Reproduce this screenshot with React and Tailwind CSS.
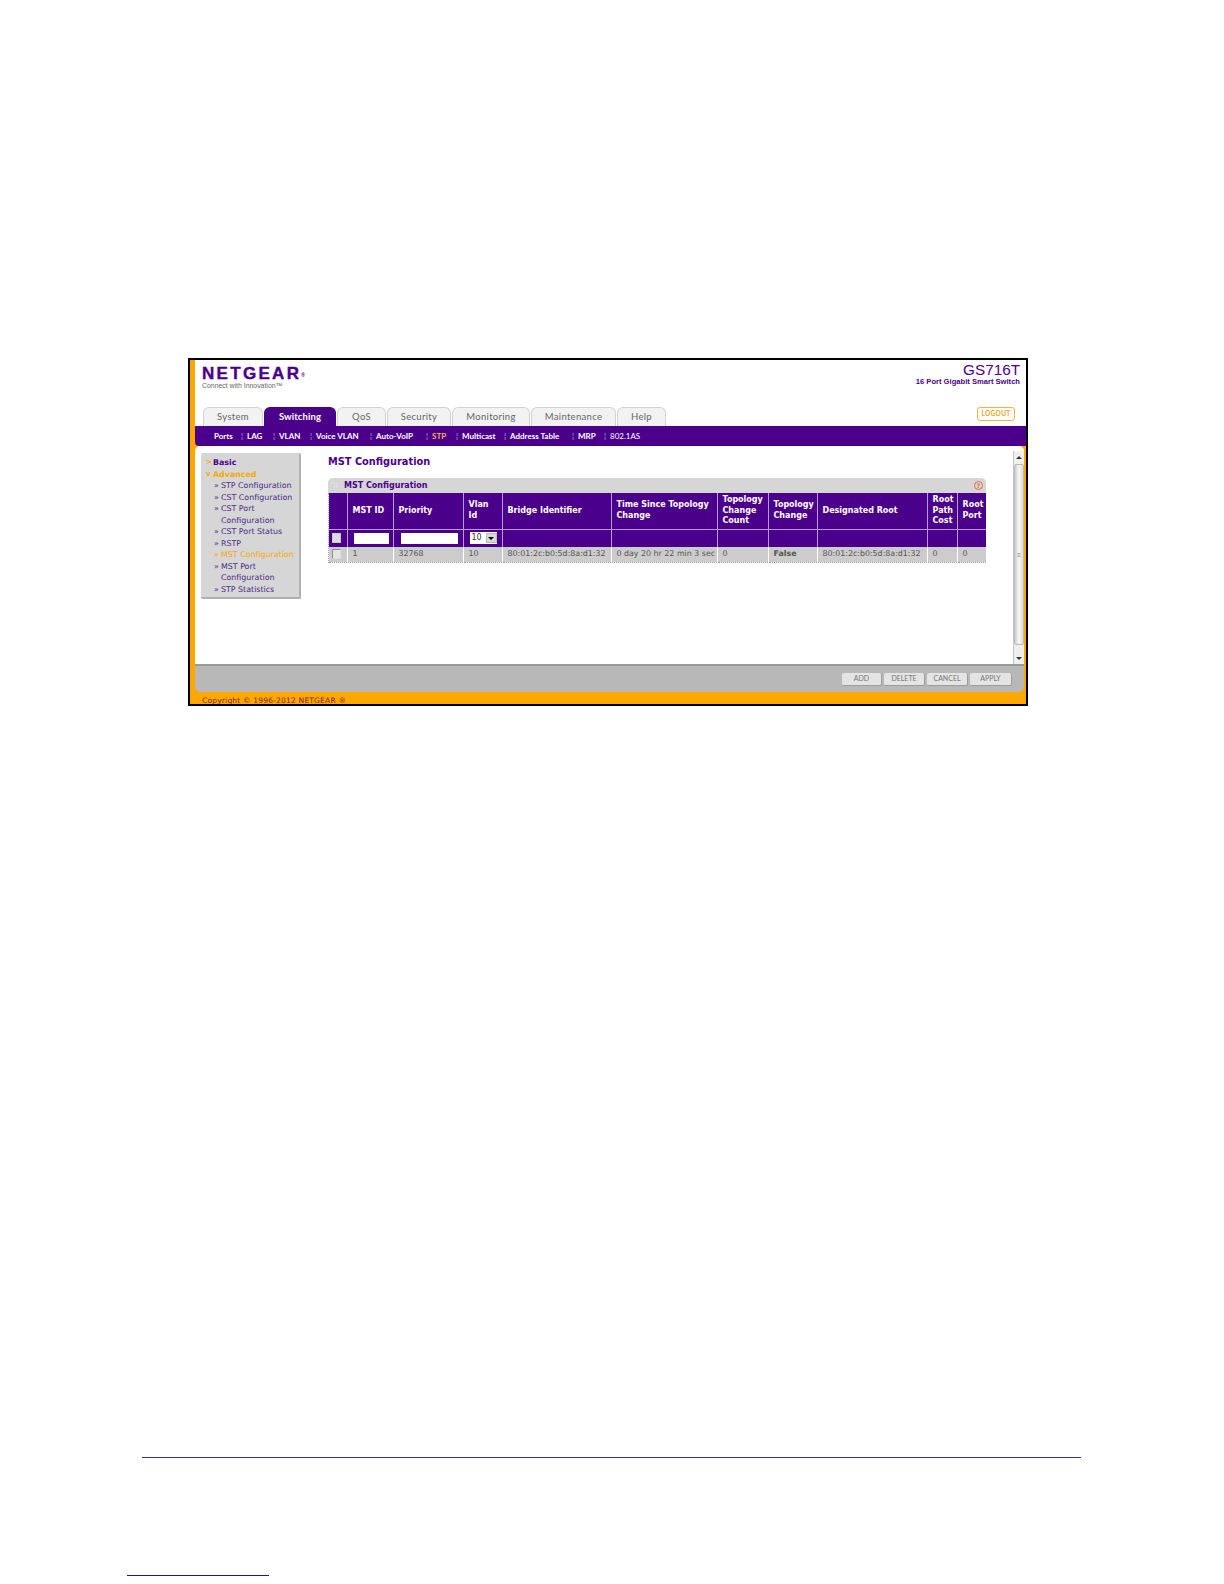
import React from 'react';

const VERDANA = 'font-["DejaVu_Sans",sans-serif]';

const tabs = [
  { label: 'System', w: 'w-[60px]' },
  { label: 'Switching', w: 'w-[72px]', active: true },
  { label: 'QoS', w: 'w-[49px]' },
  { label: 'Security', w: 'w-[64px]' },
  { label: 'Monitoring', w: 'w-[78px]' },
  { label: 'Maintenance', w: 'w-[85px]' },
  { label: 'Help', w: 'w-[49px]' },
];

const navItems = [
  { label: 'Ports', w: 'w-[33px]' },
  { label: 'LAG', w: 'w-[32px]' },
  { label: 'VLAN', w: 'w-[37px]' },
  { label: 'Voice VLAN', w: 'w-[60px]' },
  { label: 'Auto-VoIP', w: 'w-[56px]' },
  { label: 'STP', w: 'w-[30px]', active: true },
  { label: 'Multicast', w: 'w-[48px]' },
  { label: 'Address Table', w: 'w-[68px]' },
  { label: 'MRP', w: 'w-[32px]' },
  { label: '802.1AS', w: 'w-[30px]', last: true },
];

const sideItems = [
  { lines: ['STP Configuration'] },
  { lines: ['CST Configuration'] },
  { lines: ['CST Port', 'Configuration'] },
  { lines: ['CST Port Status'] },
  { lines: ['RSTP'] },
  { lines: ['MST Configuration'], active: true },
  { lines: ['MST Port', 'Configuration'] },
  { lines: ['STP Statistics'] },
];

const columns = [
  { label: '', w: 'w-[18px]' },
  { label: 'MST ID', w: 'w-[46px]' },
  { label: 'Priority', w: 'w-[70px]' },
  { label: 'Vlan Id', w: 'w-[39px]' },
  { label: 'Bridge Identifier', w: 'w-[109px]' },
  { label: 'Time Since Topology Change', w: 'w-[106px]' },
  { label: 'Topology Change Count', w: 'w-[51px]' },
  { label: 'Topology Change', w: 'w-[49px]' },
  { label: 'Designated Root', w: 'w-[110px]' },
  { label: 'Root Path Cost', w: 'w-[30px]' },
  { label: 'Root Port', w: 'w-[29px]' },
];

const rowValues = ['1', '32768', '10', '80:01:2c:b0:5d:8a:d1:32', '0 day 20 hr 22 min 3 sec', '0', 'False', '80:01:2c:b0:5d:8a:d1:32', '0', '0'];

const Check = ({ dark }) => (
  <span className={`block w-[9px] h-[10px] ml-[3px] border ${dark ? 'border-[#c9c9c9] bg-[#dcdcdc]' : 'border-[#8f8f8f] border-r-[#dddddd] border-b-[#dddddd] bg-[#e4e4e4]'}`}></span>
);

const Sidebar = () => (
  <div className={`w-[100px] h-[146px] mt-[7px] ml-[6px] shrink-0 bg-[#d6d6d6] rounded-[2px] border-r-2 border-b-2 border-[#b0b0b0] pt-[4px] text-[7.9px] leading-[11.5px] ${VERDANA}`}>
    <div className="flex font-bold text-[#4b008c]">
      <span className="w-[12px] pl-[5px] text-[7px] text-[#f7a800]">&gt;</span>Basic
    </div>
    <div className="flex font-bold text-[#f7a800]">
      <span className="w-[12px] pl-[5px] text-[7px]">v</span>Advanced
    </div>
    {sideItems.map((item) => (
      <div key={item.lines[0] + item.lines.length} className={item.active ? 'text-[#f7a800]' : 'text-[#4b2a86]'}>
        {item.lines.map((line, i) => (
          <div key={line} className="flex whitespace-nowrap">
            <span className="w-[20px] pl-[13px]">{i === 0 ? '»' : ''}</span>{line}
          </div>
        ))}
      </div>
    ))}
  </div>
);

const ConfigTable = () => (
  <div className={`w-[658px] ${VERDANA}`}>
    <div className="h-[15px] bg-[#d6d6d6] rounded-t-[5px] flex items-center pl-[5px] pr-[3px]">
      <span className="w-[11px] text-[7px] text-white leading-none">::</span>
      <span className="font-bold text-[8px] text-[#4b008c]">MST Configuration</span>
      <span className="ml-auto w-[9px] h-[9px] rounded-full border border-[#e8693a] text-[6px] leading-[7px] text-center font-bold text-[#e8693a]">?</span>
    </div>
    <div className="border-l border-dotted border-[#b79ad6]">
      <table className="w-[657px] table-fixed border-collapse text-[8px]">
        <thead>
          <tr className="h-[36px] bg-[#4b008c]">
            {columns.map((c, i) => (
              <th key={i} className={`${c.w} border-b border-r border-[#b79ad6] last:border-r-0 px-[5px] text-left align-middle font-bold leading-[10.5px] text-white`}>{c.label}</th>
            ))}
          </tr>
        </thead>
        <tbody>
          <tr className="h-[18px] bg-[#4b008c]">
            <td className="border-r border-[#b79ad6]"><Check dark /></td>
            <td className="border-r border-[#b79ad6] pl-[6px]"><div className="h-[11px] bg-white w-[35px]"></div></td>
            <td className="border-r border-[#b79ad6] pl-[7px]"><div className="h-[11px] bg-white w-[57px]"></div></td>
            <td className="border-r border-[#b79ad6] pl-[6px]">
              <div className="flex h-[12px] w-[27px] bg-white items-center">
                <span className="pl-[2px] w-[16px] text-[#333] text-[8px]">10</span>
                <span className="w-[11px] h-[10px] bg-[#d8d8d8] border border-[#bbb] flex items-center justify-center">
                  <span className="w-0 h-0 border-x-[3px] border-x-transparent border-t-[3px] border-t-black"></span>
                </span>
              </div>
            </td>
            {columns.slice(4).map((c, i) => (
              <td key={i} className="border-r border-[#b79ad6] last:border-r-0"></td>
            ))}
          </tr>
          <tr className="h-[15px] bg-[#cccccc] border-b border-dotted border-[#999]">
            <td className="border-r border-white"><Check /></td>
            {rowValues.map((v, i) => (
              <td key={i} className={`border-r border-white last:border-r-0 pl-[5px] whitespace-nowrap overflow-hidden text-[7.9px] text-[#555] ${v === 'False' ? 'font-bold' : ''}`}>{v}</td>
            ))}
          </tr>
        </tbody>
      </table>
    </div>
  </div>
);

const Scrollbar = () => (
  <div className="w-[11px] h-full flex flex-col bg-[#efefef] border-l border-[#c4c4c4]">
    <div className="h-[13px] pt-[5px] flex justify-center">
      <span className="w-0 h-0 border-x-[3px] border-x-transparent border-b-[3px] border-b-[#333]"></span>
    </div>
    <div className="h-[181px] bg-linear-to-r from-[#cfcfcf] via-[#f7f7f7] to-[#dcdcdc] border border-[#bbbbbb] rounded-[2px] flex items-center justify-center text-[6px] leading-none text-[#777]">≡</div>
    <div className="flex-1 pt-[12px] flex justify-center">
      <span className="w-0 h-0 border-x-[3px] border-x-transparent border-t-[3px] border-t-[#333]"></span>
    </div>
  </div>
);

const buttons = [
  { label: 'ADD', w: 'w-[40px]' },
  { label: 'DELETE', w: 'w-[41px]' },
  { label: 'CANCEL', w: 'w-[41px]' },
  { label: 'APPLY', w: 'w-[42px]' },
];

export default function App() {
  return (
    <div className="w-[1224px] h-[1584px] bg-white overflow-hidden">
      <div className="pt-[358px] pl-[188px]">
        <div className="w-[840px] h-[348px] border-2 border-black bg-[#fca800] overflow-hidden">
          {/* white header */}
          <div className="ml-[5px] h-[47px] bg-white flex justify-between pl-[7px] pr-[6px] pt-[6px]">
            <div>
              <div className='font-["Liberation_Sans",sans-serif] font-bold text-[17px] leading-[15px] tracking-[2.3px] text-[#4b008c] [-webkit-text-stroke:0.4px_#4b008c]'>NETGEAR<sup className="text-[5px] [-webkit-text-stroke:0]">®</sup></div>
              <div className='font-["Liberation_Sans",sans-serif] text-[6.9px] leading-[9px] text-[#666]'>Connect with Innovation™</div>
            </div>
            <div className='-mt-[4px] text-right font-["Liberation_Sans",sans-serif] text-[#4b008c]'>
              <div className="text-[15.3px] leading-[15px]">GS716T</div>
              <div className="text-[7.6px] font-bold leading-[9px]">16 Port Gigabit Smart Switch</div>
            </div>
          </div>
          {/* tabs */}
          <div className='ml-[5px] h-[19px] bg-white flex items-end pl-[8px] pr-[11px] font-["Lato",sans-serif] text-[9.5px] tracking-[0.3px]'>
            <div className="flex gap-[1px] h-[19px]">
              {tabs.map((t) => (
                <div key={t.label} className={`${t.w} flex items-center justify-center rounded-t-[6px] border border-b-0 ${t.active ? 'bg-[#4b008c] border-[#4b008c] text-white font-bold tracking-[0.1px]' : 'bg-[#f2f2f2] border-[#d2d2d2] text-[#666]'}`}>{t.label}</div>
              ))}
            </div>
            <div className="ml-auto mb-[5px] w-[38px] h-[14px] flex items-center justify-center bg-white border border-[#f2b43c] rounded-[3px] text-[6.5px] font-bold text-[#e9a520]">LOGOUT</div>
          </div>
          {/* purple nav */}
          <div className='ml-[5px] h-[20px] bg-[#4b008c] rounded-bl-[4px] flex items-center pl-[19px] font-["Lato",sans-serif] font-bold text-[8px] text-white'>
            {navItems.map((n) => (
              <div key={n.label} className={`${n.w} shrink-0 flex whitespace-nowrap ${n.active ? 'text-[#f7b04a]' : ''} ${n.last ? 'font-normal' : ''}`}>
                <span className="flex-1">{n.label}</span>
                {!n.last && <span className="w-[6px] font-normal text-[#c9b3e0]">¦</span>}
              </div>
            ))}
          </div>
          {/* content */}
          <div className="ml-[5px] mr-[2px] h-[218px] bg-white rounded-t-[5px] flex">
            <Sidebar />
            <div className="ml-[27px] pt-[9px]">
              <h1 className={`text-[9.8px] leading-[14px] font-bold text-[#4b008c] mb-[9px] ${VERDANA}`}>MST Configuration</h1>
              <ConfigTable />
            </div>
            <div className="ml-auto pt-[5px] h-full shrink-0">
              <Scrollbar />
            </div>
          </div>
          {/* footer buttons */}
          <div className="ml-[5px] mr-[2px] h-[28px] bg-[#b8b8b8] border-t-2 border-[#9a9a9a] rounded-b-[5px] flex items-center justify-end gap-[2px] pr-[12px]">
            {buttons.map((b) => (
              <div key={b.label} className={`${b.w} h-[13px] flex items-center justify-center bg-[#e4e4e4] border-b border-r border-[#9c9c9c] rounded-[2px] font-["Lato",sans-serif] text-[7px] text-[#777]`}>{b.label}</div>
            ))}
          </div>
          <div className={`ml-[12px] h-[12px] text-[7.5px] leading-[17px] tracking-[0.2px] whitespace-nowrap text-[#7a1f3a] ${VERDANA}`}>Copyright © 1996-2012 NETGEAR ®</div>
        </div>
      </div>
      <div className="mt-[751px] ml-[142px] w-[939px] h-[1px] bg-[#37307f]"></div>
      <div className="mt-[117px] ml-[127px] w-[142px] h-[1px] bg-[#1a1a8c]"></div>
    </div>
  );
}
